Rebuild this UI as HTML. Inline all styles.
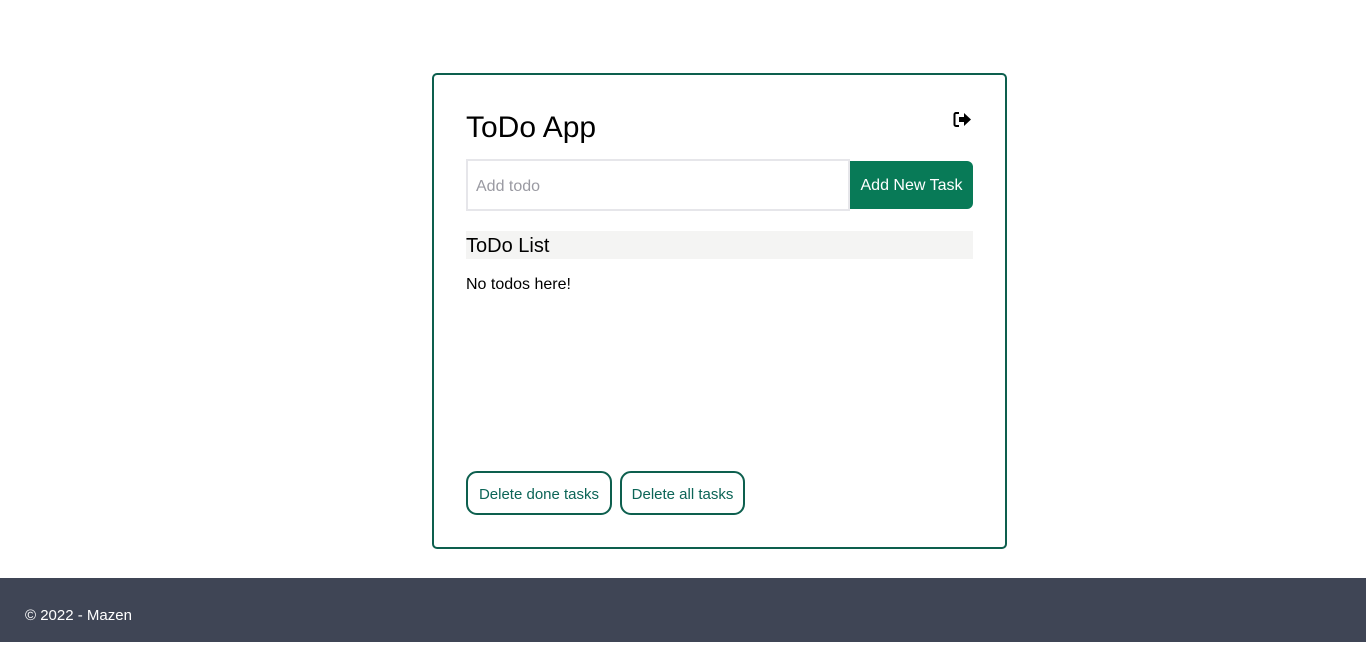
<!DOCTYPE html>
<html><head><style>
body{margin:0;width:1366px;height:642px;position:relative;font-family:"Liberation Sans",sans-serif;background:#fff;overflow:hidden}
.card{position:absolute;left:432px;top:73px;width:571px;height:472px;border:2px solid #0d5f4e;border-radius:5px}
.a{position:absolute}
</style></head><body>
<div class="card"></div>
<div class="a" style="left:466px;top:111px;font-size:30px;color:#000">ToDo App</div>
<svg class="a" style="left:953px;top:111px" width="19" height="17" viewBox="0 0 19 17">
<path d="M6 2H3a1.5 1.5 0 0 0-1.5 1.5v10A1.5 1.5 0 0 0 3 15h3" fill="none" stroke="#000" stroke-width="2"/>
<path d="M6 6h5V2l7 6.5-7 6.5v-4H6z" fill="#000"/></svg>
<div class="a" style="left:466px;top:159px;width:380px;height:48px;border:2px solid #e6e6ea;font-size:16px;color:#9a9aa2;line-height:52px;text-indent:8px">Add todo</div>
<div class="a" style="left:850px;top:161px;width:123px;height:48px;background:#087a57;border-radius:0 6px 6px 0;color:#fff;font-size:16px;line-height:50px;text-align:center">Add New Task</div>
<div class="a" style="left:466px;top:231px;width:507px;height:28px;background:#f4f4f3;font-size:20px;line-height:31px">ToDo List</div>
<div class="a" style="left:466px;top:276px;font-size:16px">No todos here!</div>
<div class="a" style="left:466px;top:471px;width:142px;height:40px;border:2px solid #0d5f4e;border-radius:11px;color:#0c6557;font-size:15px;line-height:44px;text-align:center">Delete done tasks</div>
<div class="a" style="left:620px;top:471px;width:121px;height:40px;border:2px solid #0d5f4e;border-radius:11px;color:#0c6557;font-size:15px;line-height:44px;text-align:center">Delete all tasks</div>
<div class="a" style="left:0;top:578px;width:1366px;height:64px;background:#3f4555;color:#fff;font-size:15px;line-height:75px;text-indent:25px">© 2022 - Mazen</div>
</body></html>
